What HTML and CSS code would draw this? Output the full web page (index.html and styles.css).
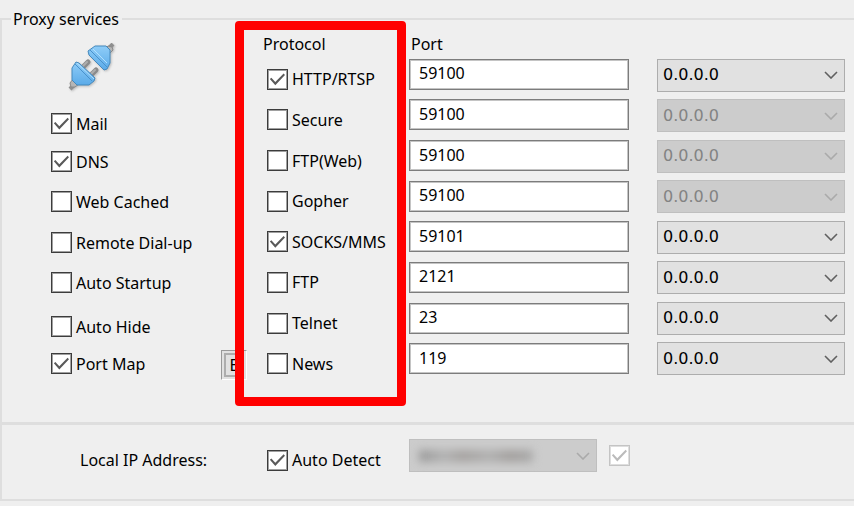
FILE: index.html
```html
<!DOCTYPE html>
<html lang="en">
<head>
<meta charset="utf-8">
<meta name="viewport" content="width=device-width, initial-scale=1">
<title>Proxy services</title>
<link rel="stylesheet" href="styles.css">
</head>
<body>
<form>
  <fieldset class="group services">
    <legend>Proxy services</legend>
    <div class="columns">
      <div class="options">
        <svg class="plug" viewBox="0 0 48 48" aria-hidden="true">
          <defs>
            <linearGradient id="blue" x1="0" y1="0" x2="0" y2="1">
              <stop offset="0" stop-color="#8fcdf8"/>
              <stop offset="1" stop-color="#5aaae8"/>
            </linearGradient>
          </defs>
          <g stroke-linejoin="round">
            <path d="M41 5l4-4" stroke="#8f8f8f" stroke-width="4"/>
            <path d="M37 6l3-3 4 1 1 3-4 4z" fill="#b5b5b5" stroke="#8a8a8a"/>
            <path d="M2 46l4-4" stroke="#8f8f8f" stroke-width="4"/>
            <path d="M2 40l3-4 6 5-4 3-4 0z" fill="#b5b5b5" stroke="#8a8a8a"/>
            <path d="M15 24l5-5M23 32l5-5" stroke="#8b8b8b" stroke-width="5" stroke-linecap="round"/>
            <path d="M15 23l4-4M23 31l4-4" stroke="#adadad" stroke-width="2" stroke-linecap="round"/>
            <path d="M20 8l7-5h11l4 4v13l-3 6-3 1-15-15z" fill="url(#blue)" stroke="#4589bd"/>
            <path d="M22 7l17 17" stroke="#4a92cc"/>
            <path d="M25 6l14 14" stroke="#b0dffd"/>
            <path d="M4 25l4-6 3 1 16 15-1 3-5 4H9l-5-5z" fill="url(#blue)" stroke="#4589bd"/>
            <path d="M7 21l17 17" stroke="#4a92cc"/>
            <path d="M9 20l17 16" stroke="#b0dffd"/>
          </g>
        </svg>
        <div class="option-list">
          <label class="check"><input type="checkbox" checked>Mail</label>
          <label class="check"><input type="checkbox" checked>DNS</label>
          <label class="check"><input type="checkbox">Web Cached</label>
          <label class="check"><input type="checkbox">Remote Dial-up</label>
          <label class="check"><input type="checkbox">Auto Startup</label>
          <label class="check"><input type="checkbox">Auto Hide</label>
          <div class="port-map">
            <label class="check"><input type="checkbox" checked>Port Map</label>
            <button type="button" class="edit">E</button>
          </div>
        </div>
      </div>

      <div class="protocols">
        <div class="heading">Protocol</div>
        <div class="rows">
          <label class="check"><input type="checkbox" checked>HTTP/RTSP</label>
          <label class="check"><input type="checkbox">Secure</label>
          <label class="check"><input type="checkbox">FTP(Web)</label>
          <label class="check"><input type="checkbox">Gopher</label>
          <label class="check"><input type="checkbox" checked>SOCKS/MMS</label>
          <label class="check"><input type="checkbox">FTP</label>
          <label class="check"><input type="checkbox">Telnet</label>
          <label class="check"><input type="checkbox">News</label>
        </div>
      </div>

      <div class="ports">
        <div class="heading">Port</div>
        <div class="rows">
          <input class="port" type="text" value="59100" aria-label="HTTP/RTSP port">
          <input class="port" type="text" value="59100" aria-label="Secure port">
          <input class="port" type="text" value="59100" aria-label="FTP(Web) port">
          <input class="port" type="text" value="59100" aria-label="Gopher port">
          <input class="port" type="text" value="59101" aria-label="SOCKS/MMS port">
          <input class="port" type="text" value="2121" aria-label="FTP port">
          <input class="port" type="text" value="23" aria-label="Telnet port">
          <input class="port" type="text" value="119" aria-label="News port">
        </div>
      </div>

      <div class="addresses">
        <div class="heading"></div>
        <div class="rows">
          <div class="combo"><select aria-label="HTTP/RTSP address"><option>0.0.0.0</option></select><svg viewBox="0 0 14 8" aria-hidden="true"><path d="M1 1l6 6 6-6"/></svg></div>
          <div class="combo"><select disabled aria-label="Secure address"><option>0.0.0.0</option></select><svg viewBox="0 0 14 8" aria-hidden="true"><path d="M1 1l6 6 6-6"/></svg></div>
          <div class="combo"><select disabled aria-label="FTP(Web) address"><option>0.0.0.0</option></select><svg viewBox="0 0 14 8" aria-hidden="true"><path d="M1 1l6 6 6-6"/></svg></div>
          <div class="combo"><select disabled aria-label="Gopher address"><option>0.0.0.0</option></select><svg viewBox="0 0 14 8" aria-hidden="true"><path d="M1 1l6 6 6-6"/></svg></div>
          <div class="combo"><select aria-label="SOCKS/MMS address"><option>0.0.0.0</option></select><svg viewBox="0 0 14 8" aria-hidden="true"><path d="M1 1l6 6 6-6"/></svg></div>
          <div class="combo"><select aria-label="FTP address"><option>0.0.0.0</option></select><svg viewBox="0 0 14 8" aria-hidden="true"><path d="M1 1l6 6 6-6"/></svg></div>
          <div class="combo"><select aria-label="Telnet address"><option>0.0.0.0</option></select><svg viewBox="0 0 14 8" aria-hidden="true"><path d="M1 1l6 6 6-6"/></svg></div>
          <div class="combo"><select aria-label="News address"><option>0.0.0.0</option></select><svg viewBox="0 0 14 8" aria-hidden="true"><path d="M1 1l6 6 6-6"/></svg></div>
        </div>
      </div>
    </div>
  </fieldset>

  <fieldset class="group local">
    <label class="local-label" for="local-ip">Local IP Address:</label>
    <label class="check"><input type="checkbox" checked>Auto Detect</label>
    <div class="local-address">
      <div class="combo">
        <select id="local-ip" disabled><option></option></select>
        <span class="redacted"></span>
        <svg viewBox="0 0 14 8" aria-hidden="true"><path d="M1 1l6 6 6-6"/></svg>
      </div>
      <div class="check"><input type="checkbox" checked disabled aria-label="Use local address"></div>
    </div>
  </fieldset>
</form>
</body>
</html>
```
FILE: styles.css
```css
* {
  box-sizing: border-box;
}

body {
  margin: 0;
  background: #efefef;
  color: #000;
  font: 16px/20px "Noto Sans", "DejaVu Sans Condensed", sans-serif;
}

form {
  padding-top: 9px;
}

.group {
  min-width: 0;
  margin: 0;
  padding: 0;
  border: 2px solid #dedede;
  border-right: 0;
}

.services {
  border-bottom-width: 1px;
}

legend {
  margin-left: 9px;
  padding: 0 3px 0 2px;
}

.columns {
  display: grid;
  grid-template-columns: 245px 162px minmax(0, 220fr) minmax(0, 216fr);
  padding: 5px 9px 38px 0;
}

.options {
  display: flex;
  flex-direction: column;
  padding: 9px 0 0 49px;
}

.plug {
  width: 48px;
  height: 48px;
  margin-left: 17px;
  filter: drop-shadow(1px 1px 1px #bbb);
}

.option-list {
  display: grid;
  grid-template-rows: 38px 40px 41px 40px 44px 37px auto;
  align-items: start;
  margin-top: 22px;
}

.port-map {
  display: flex;
  align-items: start;
  justify-content: space-between;
}

.check {
  display: flex;
  align-items: center;
  gap: 4px;
  white-space: nowrap;
}

.check input {
  appearance: none;
  display: grid;
  flex: none;
  width: 21px;
  height: 21px;
  margin: 0;
  border: 1px solid #3c3c3c;
  padding: 1px;
  background: #fff;
  box-shadow: inset 0 0 0 1px #a0a0a0;
}

.check input:checked::before {
  content: "";
  background: #5a5a5a;
  clip-path: polygon(5% 48%, 14% 41%, 37% 66%, 86% 16%, 94% 25%, 37% 85%);
}

.check input:disabled {
  border-color: #c4c4c4;
  box-shadow: inset 0 0 0 1px #dedede;
}

.check input:disabled::before {
  background: #bbb;
}

.edit {
  width: 26px;
  height: 30px;
  margin-top: -3px;
  padding: 0;
  border: 1px solid;
  border-color: #999 #fff #fff #999;
  outline: 2px solid #adadad;
  outline-offset: -5px;
  background: #e1e1e1;
  font: inherit;
}

.protocols {
  position: relative;
  padding-left: 16px;
}

/* Highlight frame around the protocol column */
.protocols::after {
  content: "";
  position: absolute;
  inset: -13px 3px -22px -12px;
  border: 9px solid #f00;
  border-radius: 4px;
  pointer-events: none;
}

.heading {
  height: 20px;
}

.rows {
  display: grid;
  grid-auto-rows: 1fr;
  align-items: center;
  height: 325px;
}

.protocols .rows {
  height: 330px;
  margin-left: 4px;
  padding-top: 5px;
}

.ports .heading {
  padding-left: 2px;
}

.port {
  width: 100%;
  height: 31px;
  padding: 0 9px 2px;
  border: 1px solid #7c7c7c;
  background: #fff;
  box-shadow: inset 0 0 0 1px #c4c4c4;
  color: #000;
  font: inherit;
}

.addresses {
  padding-left: 28px;
}

.addresses .rows {
  padding-top: 1px;
}

.combo {
  display: grid;
  grid-template-columns: minmax(0, 1fr) 28px;
  align-items: center;
}

.combo select {
  appearance: none;
  grid-area: 1 / 1 / 2 / 3;
  width: 100%;
  height: 33px;
  padding: 0 5px;
  border: 1px solid #adadad;
  background: #e1e1e1;
  color: #000;
  font: 16px/20px "DejaVu Sans", sans-serif;
}

.combo select:disabled {
  border-color: #bfbfbf;
  background: #ccc;
  color: #838383;
  opacity: 1;
}

.combo svg {
  grid-area: 1 / 2;
  width: 14px;
  height: 8px;
  margin-left: 7px;
  fill: none;
  stroke: #606060;
  stroke-width: 1.6;
  pointer-events: none;
}

.combo select:disabled ~ svg {
  stroke: #aaa;
}

.local {
  display: grid;
  grid-template-columns: 187px 142px minmax(0, 1fr);
  align-items: center;
  padding: 14px 9px 27px 78px;
}

.local > .check,
.local-label {
  padding-top: 9px;
}

.local-address {
  display: grid;
  grid-template-columns: minmax(0, 188fr) minmax(0, 236fr);
  gap: 12px;
  align-items: center;
}

.redacted {
  grid-area: 1 / 1;
  width: 114px;
  height: 12px;
  margin-left: 10px;
  background: linear-gradient(90deg, #989898, #b2b2b2 22%, #a5a2a0 38%, #b0b0b0 62%, #a29f9d 80%, #aaa);
  filter: blur(4px);
}
```
